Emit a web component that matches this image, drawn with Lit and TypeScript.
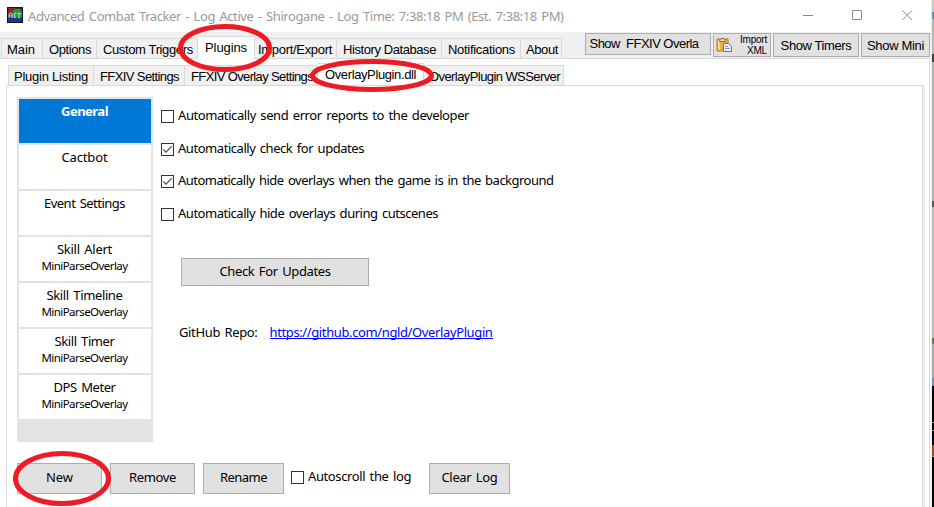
import { LitElement, html, css, svg, nothing } from "lit";
import { customElement, property } from "lit/decorators.js";
import { styleMap } from "lit/directives/style-map.js";

const FACES: Record<string, string> = {
  ui: '13px "Liberation Sans"',
  tiny: '10px "Liberation Sans"',
  body: '13px "Noto Sans"',
  bold: 'bold 13px "Noto Sans"',
  small: '11.5px "Noto Sans"',
  title: '13px "Noto Sans"',
};

/** Extra width of each space, by face. */
const WORD_GAP: Record<string, number> = { body: 1.5, title: 1.5 };

const pen = document.createElement("canvas").getContext("2d")!;

/** One line of text, tracked so that it spans a given width. */
@customElement("tracked-text")
class TrackedText extends LitElement {
  @property() text = "";
  @property() face = "body";
  @property({ type: Number }) span = 0;

  static styles = css`
    :host { display: inline-block; white-space: pre; }
    .t { display: block; }
    .ui { font: 13px/16px "Liberation Sans", sans-serif; }
    .tiny { font: 10px/11px "Liberation Sans", sans-serif; }
    .body { font: 13px/16px "Noto Sans", sans-serif; word-spacing: 1.5px; }
    .bold { font: bold 13px/16px "Noto Sans", sans-serif; }
    .small { font: 11.5px/16px "Noto Sans", sans-serif; }
    .title { font: 13px/16px "Noto Sans", sans-serif; word-spacing: 1.5px; }
  `;

  render() {
    pen.font = FACES[this.face] + ", sans-serif";
    const spaces = this.text.split(" ").length - 1;
    const natural = pen.measureText(this.text).width + spaces * (WORD_GAP[this.face] ?? 0);
    const gap = (this.span - natural) / this.text.length;
    return html`<span class="t ${this.face}" style=${styleMap({ letterSpacing: gap.toFixed(3) + "px" })}>${this.text}</span>`;
  }
}

const text = (t: string, span: number, face = "body") =>
  html`<tracked-text .text=${t} .span=${span} .face=${face}></tracked-text>`;

interface Tab { label: string; width: number; span: number; pad: number; on?: boolean }

const MAIN_TABS: Tab[] = [
  { label: "Main", width: 42, span: 28, pad: 5 },
  { label: "Options", width: 54, span: 42, pad: 6 },
  { label: "Custom Triggers", width: 101, span: 90, pad: 6 },
  { label: "Plugins", width: 57, span: 42, pad: 7, on: true },
  { label: "Import/Export", width: 82, span: 74, pad: 3 },
  { label: "History Database", width: 105, span: 93, pad: 6 },
  { label: "Notifications", width: 79, span: 67, pad: 6 },
  { label: "About", width: 41, span: 32, pad: 5 },
];

const PLUGIN_TABS: Tab[] = [
  { label: "Plugin Listing", width: 86, span: 74, pad: 5 },
  { label: "FFXIV Settings", width: 91, span: 79, pad: 6 },
  { label: "FFXIV Overlay Settings", width: 133, span: 122, pad: 6 },
  { label: "OverlayPlugin.dll", width: 106, span: 91, pad: 7, on: true },
  { label: "OverlayPlugin WSServer", width: 140, span: 131, pad: 5 },
];

const ENTRIES: [string, number, string?][] = [
  ["General", 47],
  ["Cactbot", 46],
  ["Event Settings", 81],
  ["Skill Alert", 55, "MiniParseOverlay"],
  ["Skill Timeline", 76, "MiniParseOverlay"],
  ["Skill Timer", 60, "MiniParseOverlay"],
  ["DPS Meter", 62, "MiniParseOverlay"],
];

const CHECKS: [string, number, boolean][] = [
  ["Automatically send error reports to the developer", 291, false],
  ["Automatically check for updates", 186, true],
  ["Automatically hide overlays when the game is in the background", 375.5, true],
  ["Automatically hide overlays during cutscenes", 260, false],
];

const box = (checked: boolean) => html`
  <svg class="box" width="13" height="13" viewBox="0 0 13 13">
    <rect x=".5" y=".5" width="12" height="12" fill="#fff" stroke="#333" />
    ${checked ? svg`<path d="M2.3 6.3 5 9.1 10.8 3.2" fill="none" stroke="#444" stroke-width="1.2" />` : nothing}
  </svg>`;

const ring = (cls: string, w: number, h: number) => html`
  <svg class="ring ${cls}" width=${w} height=${h}>
    <ellipse cx=${w / 2} cy=${h / 2} rx=${w / 2 - 2.5} ry=${h / 2 - 2.5}
      fill="none" stroke="#ed1c24" stroke-width="5" />
  </svg>`;

@customElement("app-root")
class AppRoot extends LitElement {
  static styles = css`
    :host { display: block; width: 934px; height: 507px; overflow: hidden; background: #fff; color: #000; position: relative; }
    * { box-sizing: border-box; }
    svg { display: block; flex: none; }
    tracked-text { flex: none; }
    .shell { display: flex; height: 507px; }
    .window { width: 932px; flex: none; display: flex; flex-direction: column; border-right: 1px solid #ececec; }
    .desktop { width: 2px; flex: none; background: linear-gradient(#c9ccd0 0 12px, #6f8fa8 12px 19px, #b9b9b9 19px 54px, #3c3c3c 54px 62px, #b4b4b4 62px 201px, #55584f 201px 207px, #bcbcbc 207px 338px, #7a7058 338px 344px, #a9aaac 344px 378px, #7d93a8 378px 386px, #050509 386px 422px, #999 422px 423px, #050509 423px 430px, #999 430px 431px, #050509 431px 445px, #994c16 445px 456px, #999 456px 457px, #050509 457px); }

    .titlebar { height: 32px; display: flex; padding: 7px 0 0 7px; color: #999; }
    .titlebar tracked-text { margin: 1px 0 0 5px; }
    .controls { margin: 3px 18px 0 auto; }

    .strip { height: 27px; background: #f0f0f0; border-bottom: 1px solid #d9d9d9; display: flex; }
    .tabs { display: flex; align-items: flex-end; }
    .tab { height: 20px; background: #f0f0f0; border: 1px solid #d9d9d9; border-width: 1px 1px 0 0; display: flex; padding-top: 3px; overflow: hidden; }
    .tab:first-child { border-left-width: 1px; }
    .tab.on { height: 23px; background: #fff; margin-bottom: -1px; }
    .main { padding-left: 1px; }
    .tools { margin-left: auto; margin-right: 1px; display: flex; gap: 2px; padding-top: 1px; }
    .btn { background: #e1e1e1; border: 1px solid #adadad; display: flex; justify-content: center; flex: none; }
    .overlay { width: 126px; height: 22px; padding: 2px 8px 0 0; }
    .import { width: 58px; height: 24px; justify-content: space-between; padding: 3px 3px 0 2px; }
    .import .lines { display: flex; flex-direction: column; align-items: flex-end; margin-top: -3px; }
    .timers { width: 86px; height: 24px; padding-top: 4px; }
    .mini { width: 69px; height: 24px; padding-top: 4px; }

    .page { flex: 1; border-right: 1px solid #d9d9d9; margin-right: 1px; padding-right: 6px; display: flex; flex-direction: column; }
    .plugins { height: 27px; padding: 0 0 1px 8px; margin-bottom: -1px; flex: none; }
    .panel { flex: 1; margin-left: 6px; border: solid #d9d9d9; border-width: 1px 1px 0; padding: 11px 0 0 10px; box-shadow: 2px 0 #f0f0f0; }
    .upper { display: flex; gap: 8px; height: 345px; }
    .list { width: 136px; background: #e3e3e3; padding: 2px; display: flex; flex-direction: column; gap: 2px; }
    .entry { height: 44px; background: #fff; display: flex; flex-direction: column; align-items: center; padding: 4px 1px 0 0; }
    .entry.on { background: #0078d7; color: #fff; }
    .entry .sub { margin-top: -1px; }
    .checks { display: grid; grid-template-rows: 33px 32px 33px 20px; padding-top: 10px; }
    .check { display: flex; gap: 4px; align-items: flex-start; }
    .box { margin-top: 3px; }
    .update { width: 188px; height: 28px; margin: 33px 0 0 20px; padding-top: 4px; }
    .repo { display: flex; gap: 12px; margin: 38px 0 0 18px; }
    .link { color: #00f; border-bottom: 1px solid #00f; height: 16px; margin-top: -1px; }
    .footer { display: flex; gap: 8px; margin-top: 21px; }
    .footer .btn { height: 31px; padding-top: 5px; }
    .footer .check { margin: 5px 10px 0 -1px; }
    .w85 { width: 85px; }
    .w81 { width: 81px; }

    .ring { position: absolute; z-index: 2; }
    .r1 { left: 178px; top: 24px; }
    .r2 { left: 310px; top: 59px; }
    .r3 { left: 13px; top: 451px; }
  `;

  tabs(list: Tab[]) {
    return list.map((t) => html`<div class="tab ${t.on ? "on" : ""}" style=${styleMap({ width: t.width + "px", paddingLeft: t.pad + "px" })}>${text(t.label, t.span, "ui")}</div>`);
  }

  render() {
    return html`
      <div class="shell">
        <div class="window">
          <div class="titlebar">
            <svg width="16" height="16" viewBox="0 0 16 16">
              <rect width="16" height="16" fill="#15151c" />
              <path d="M1 1h8v8H1z" fill="#8b2130" />
              <path d="M9 1h6v6H9z" fill="#4a2430" />
              <path d="M1 9h14v6H1z" fill="#24308f" />
              <path d="M6 4l3-2h4l2 3v5l-3 2-3-2-3 1-3-2z" fill="#2c9a3a" />
              <path d="M2 11V7l1-1h1l1 1v4M2 9h3M9 6.500H7.500v4H9M10 6.500h4M12 6.500V11" fill="none" stroke="#b4d0c8" />
            </svg>
            ${text("Advanced Combat Tracker - Log Active - Shirogane - Log Time: 7:38:18 PM (Est. 7:38:18 PM)", 535.5, "title")}
            <svg class="controls" width="110" height="11" viewBox="0 0 110 11" fill="none" stroke="#8c8c8c">
              <path d="M0 5.500h10M49.500 .5h9v9h-9zM99.500 .5l9.500 9.500M109 .5 99.500 10" />
            </svg>
          </div>
          <div class="strip">
            <div class="tabs main">${this.tabs(MAIN_TABS)}</div>
            <div class="tools">
              <div class="btn overlay">${text("Show  FFXIV Overla", 109, "ui")}</div>
              <div class="btn import">
                <svg width="17" height="16" viewBox="0 0 17 16">
                  <path d="M1 2h11v12H1z" fill="#e8b540" stroke="#b07d18" />
                  <path d="M2 3h2v10H2z" fill="#f8da84" />
                  <path d="M3.500 3.500 5 1.500h3l1.500 2v1h-6z" fill="#d8d8d0" stroke="#7c6a3c" />
                  <path d="M7.500 6.500h5l3 3v5h-8z" fill="#e6eef8" stroke="#5d7899" />
                  <path d="M9 9.500h3M9 11.500h5" stroke="#7e9dc0" />
                </svg>
                <div class="lines">${text("Import", 27, "tiny")}${text("XML", 20, "tiny")}</div>
              </div>
              <div class="btn timers">${text("Show Timers", 71, "ui")}</div>
              <div class="btn mini">${text("Show Mini", 57, "ui")}</div>
            </div>
          </div>
          <div class="page">
            <div class="tabs plugins">${this.tabs(PLUGIN_TABS)}</div>
            <div class="panel">
              <div class="upper">
                <div class="list">
                  ${ENTRIES.map(([name, span, sub], i) => html`
                    <div class="entry ${i === 0 ? "on" : ""}">
                      ${text(name, span, i === 0 ? "bold" : "body")}
                      ${sub ? html`<div class="sub">${text(sub, 86, "small")}</div>` : nothing}
                    </div>`)}
                </div>
                <div class="options">
                  <div class="checks">
                    ${CHECKS.map(([label, span, on]) => html`<div class="check">${box(on)}${text(label, span)}</div>`)}
                  </div>
                  <div class="btn update">${text("Check For Updates", 111)}</div>
                  <div class="repo">
                    ${text("GitHub Repo:", 78.5)}
                    <div class="link">${text("https://github.com/ngld/OverlayPlugin", 223)}</div>
                  </div>
                </div>
              </div>
              <div class="footer">
                <div class="btn w85">${text("New", 27)}</div>
                <div class="btn w85">${text("Remove", 47)}</div>
                <div class="btn w81">${text("Rename", 47)}</div>
                <div class="check">${box(false)}${text("Autoscroll the log", 103)}</div>
                <div class="btn w81">${text("Clear Log", 56)}</div>
              </div>
            </div>
          </div>
        </div>
        <div class="desktop"></div>
      </div>
      ${ring("r1", 94, 48)}${ring("r2", 124, 33)}${ring("r3", 98, 55)}
    `;
  }
}
